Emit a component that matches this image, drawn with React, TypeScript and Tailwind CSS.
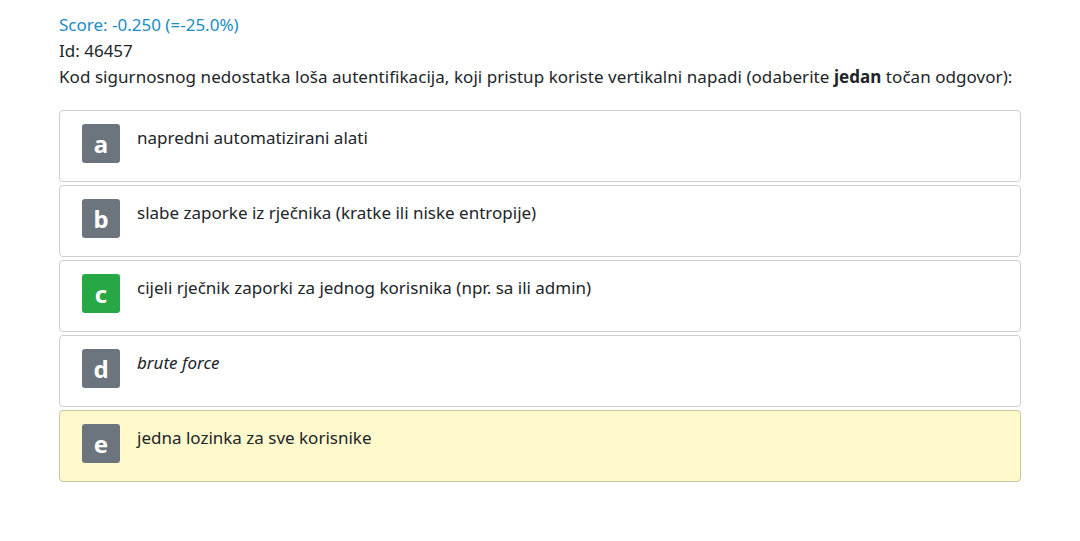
const options = [
  { key: 'a', text: 'napredni automatizirani alati' },
  { key: 'b', text: 'slabe zaporke iz rječnika (kratke ili niske entropije)' },
  { key: 'c', text: 'cijeli rječnik zaporki za jednog korisnika (npr. sa ili admin)', correct: true },
  { key: 'd', text: 'brute force', italic: true },
  { key: 'e', text: 'jedna lozinka za sve korisnike', selected: true },
];

export default function App() {
  return (
    <div className="min-h-screen bg-white text-[#212529] font-['Noto_Sans',sans-serif] text-[17px] leading-[26px]">
      <div className="w-[962px] ml-[59px] pt-[12px]">
        <div className="text-[#1a8cc4]">Score: -0.250 (=-25.0%)</div>
        <div>Id: 46457</div>
        <div className="tracking-[0.05px]">
          Kod sigurnosnog nedostatka loša autentifikacija, koji pristup koriste vertikalni napadi (odaberite{' '}
          <b>jedan</b> točan odgovor):
        </div>
        <div className="mt-[20px] flex flex-col gap-[3px]">
          {options.map(o => (
            <div
              key={o.key}
              className={`h-[72px] rounded-[4px] border flex items-start pt-[13px] pl-[22px] ${
                o.selected ? 'bg-[#fff9cc] border-[#c9c6a6]' : 'bg-white border-[#cfcfcf]'
              }`}
            >
              <div
                className={`w-[38px] h-[39px] rounded-[3px] flex items-center justify-center text-white font-bold text-[24px] ${
                  o.correct ? 'bg-[#28a745]' : 'bg-[#6c757d]'
                }`}
              >
                {o.key}
              </div>
              <div className={`ml-[17px] mt-[1px] ${o.italic ? 'italic' : ''}`}>{o.text}</div>
            </div>
          ))}
        </div>
      </div>
    </div>
  );
}
